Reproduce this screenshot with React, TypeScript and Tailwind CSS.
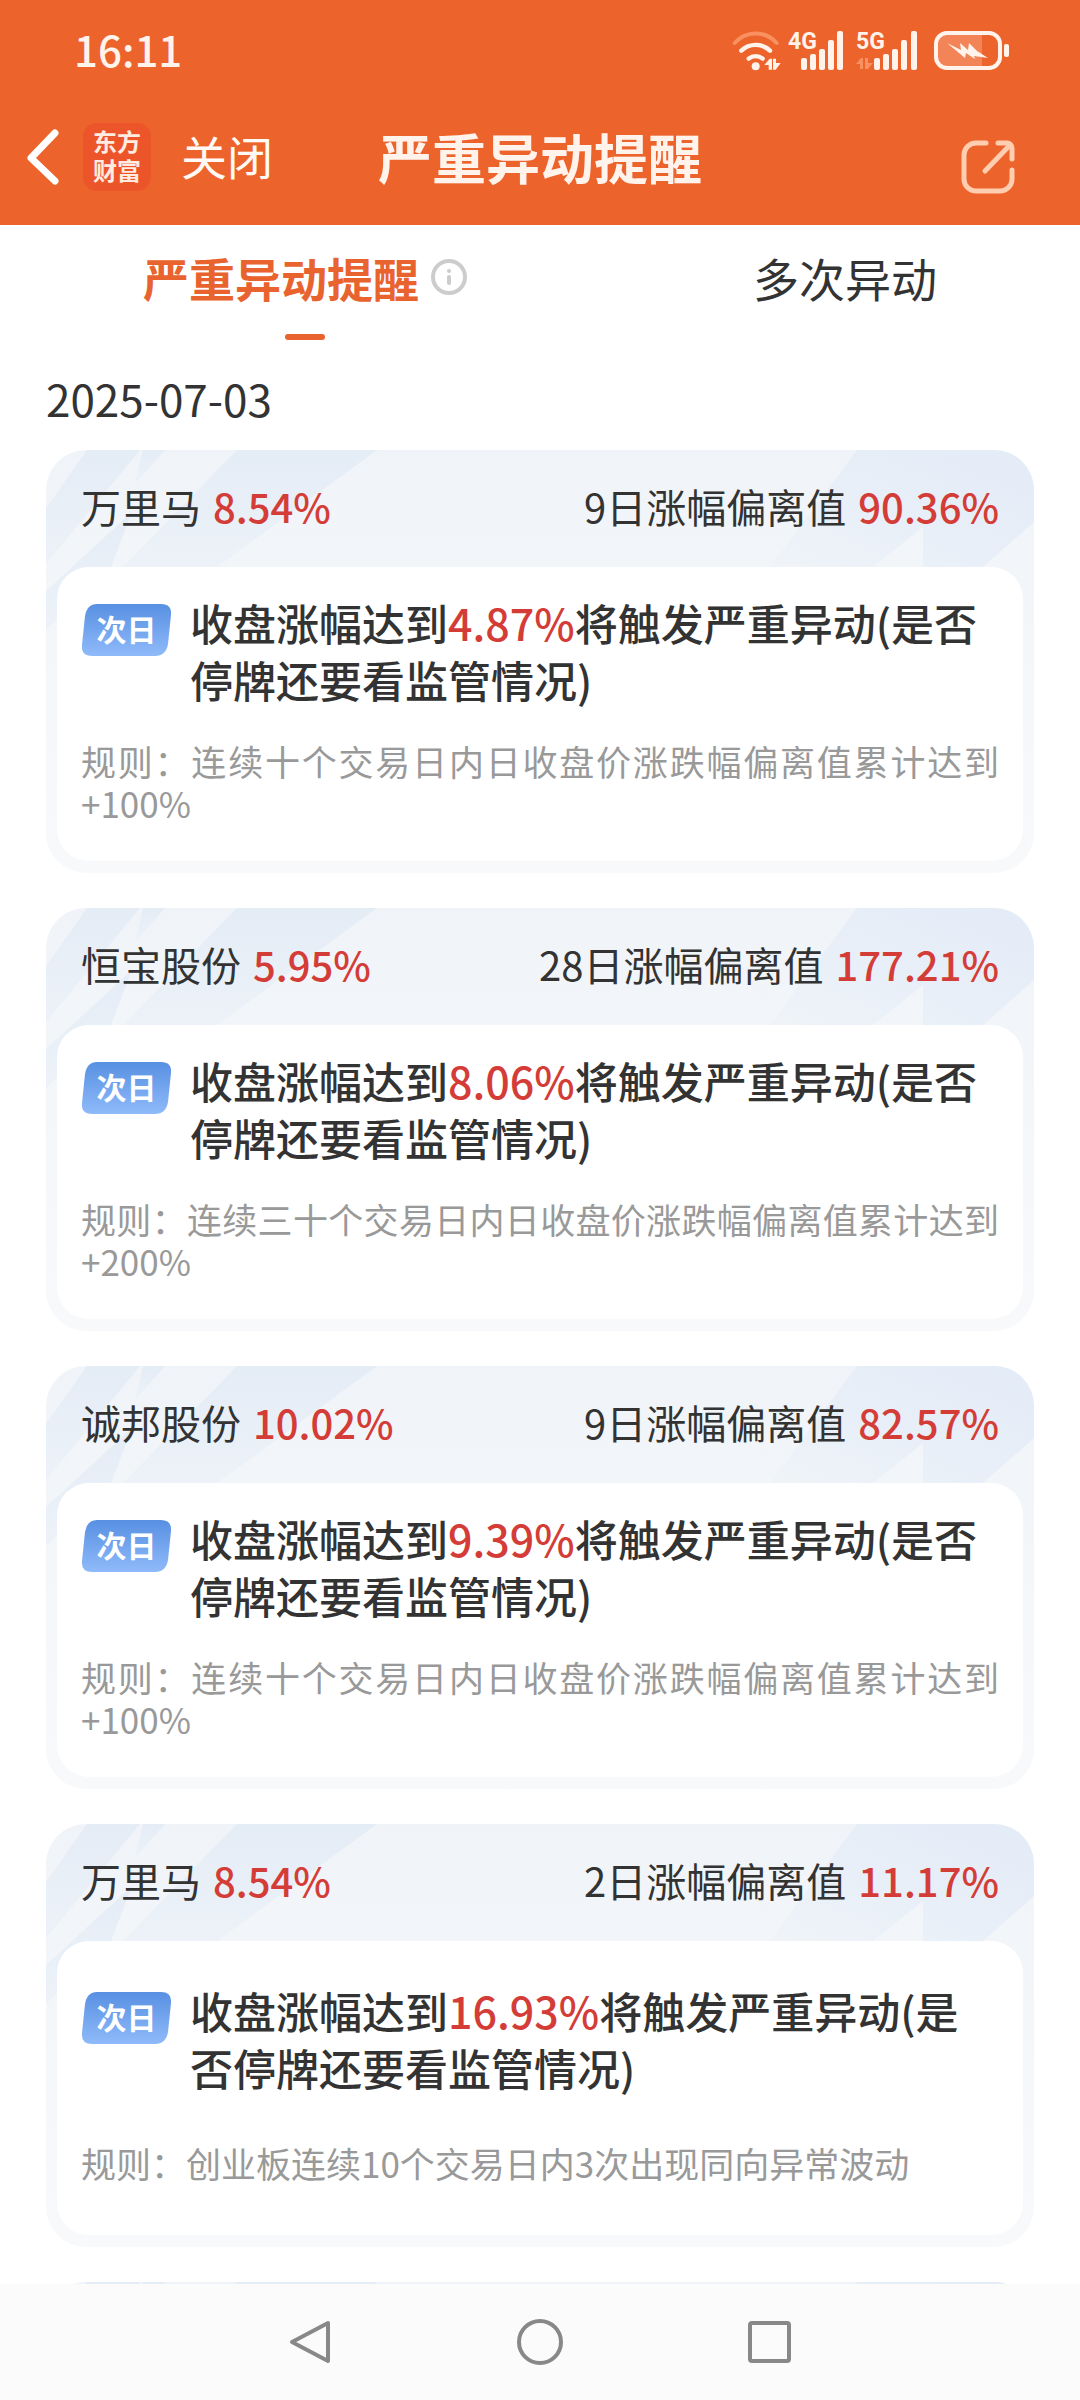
import React, { useState } from 'react';

type Alert = {
  name: string;
  change: string;
  deviationLabel: string;
  deviation: string;
  trigger: string;
  rule: string;
};

const DATE = '2025-07-03';

const ALERTS: Alert[] = [
  {
    name: '万里马',
    change: '8.54%',
    deviationLabel: '9日涨幅偏离值',
    deviation: '90.36%',
    trigger: '4.87%',
    rule: '连续十个交易日内日收盘价涨跌幅偏离值累计达到+100%',
  },
  {
    name: '恒宝股份',
    change: '5.95%',
    deviationLabel: '28日涨幅偏离值',
    deviation: '177.21%',
    trigger: '8.06%',
    rule: '连续三十个交易日内日收盘价涨跌幅偏离值累计达到+200%',
  },
  {
    name: '诚邦股份',
    change: '10.02%',
    deviationLabel: '9日涨幅偏离值',
    deviation: '82.57%',
    trigger: '9.39%',
    rule: '连续十个交易日内日收盘价涨跌幅偏离值累计达到+100%',
  },
  {
    name: '万里马',
    change: '8.54%',
    deviationLabel: '2日涨幅偏离值',
    deviation: '11.17%',
    trigger: '16.93%',
    rule: '创业板连续10个交易日内3次出现同向异常波动',
  },
];

function WifiIcon() {
  return (
    <svg width="50" height="40" viewBox="0 0 150 120" fill="none" strokeLinecap="round" aria-hidden="true">
      <path d="M8 36C42 -2 100 -2 134 36" stroke="#f9905f" strokeWidth="12" />
      <path d="M28 59C52 36 90 36 114 59" stroke="#fff3ec" strokeWidth="13" />
      <path d="M50 83C62 73 80 73 92 83" stroke="#fff3ec" strokeWidth="13" />
      <circle cx="71" cy="106" r="12" fill="#fff3ec" />
      <path d="M97 102L113 83H120V116H110V102ZM123 83H132V96H146L131 116H123Z" fill="#fff3ec" />
    </svg>
  );
}

function SignalIcon({ label, idle }: { label: string; idle?: boolean }) {
  return (
    <svg width="62" height="40" viewBox="0 0 62 40" fill="#fff3ec" aria-hidden="true">
      <text x="0" y="18" fontSize="23" fontWeight="700" fontFamily="Roboto, sans-serif">
        {label}
      </text>
      {idle && <path d="M0 33L5 27H7V38H4V33ZM9 27H12V32H17L12 38H9Z" fill="#f9905f" />}
      <rect x={idle ? 18 : 13} y="27" width="6" height="12" rx="2" />
      <rect x={idle ? 27 : 22} y="23" width="6" height="16" rx="2" />
      <rect x={idle ? 36 : 31} y="18" width="6" height="21" rx="2" />
      <rect x={idle ? 45 : 40} y="9" width="6" height="30" rx="2" />
      <rect x={idle ? 55 : 49} y="0" width="6" height="39" rx="2" />
    </svg>
  );
}

function BatteryIcon() {
  return (
    <svg width="76" height="40" viewBox="0 0 76 40" aria-hidden="true">
      <path d="M12 3H48V37H12A10 10 0 0 1 2 27V13A10 10 0 0 1 12 3Z" fill="#f28457" />
      <rect x="2" y="2" width="64" height="35" rx="11" fill="none" stroke="#fff3ec" strokeWidth="4" />
      <rect x="70" y="13" width="5" height="13" rx="2" fill="#fff3ec" />
      <path d="M13 12L27 19L26 12L34 19L35 12L43 20L54 27L40 25L41 28L32 22L31 27Z" fill="#fff3ec" />
    </svg>
  );
}

function StatusBar() {
  return (
    <div className="flex h-[102px] items-center justify-between pr-[70px] pl-[74px]">
      <span className="pb-1 text-[42px] leading-none font-medium text-[#fff3ec]">16:11</span>
      <div className="flex items-center">
        <WifiIcon />
        <div className="ml-[6px] flex gap-[6px]">
          <SignalIcon label="4G" />
          <SignalIcon label="5G" idle />
        </div>
        <div className="ml-4">
          <BatteryIcon />
        </div>
      </div>
    </div>
  );
}

function TitleBar() {
  return (
    <div className="grid h-[123px] grid-cols-[1fr_auto_1fr] items-center pb-[14px]">
      <div className="flex items-center pl-[25px]">
        <button type="button" aria-label="返回">
          <svg width="36" height="58" viewBox="0 0 36 58" fill="none" stroke="#fff" strokeWidth="7" strokeLinecap="round" strokeLinejoin="round">
            <path d="M30 5L6 30L30 53" />
          </svg>
        </button>
        <span className="ml-[22px] flex h-[68px] w-[68px] flex-col items-center justify-center rounded-[14px] bg-[#ec552a] pb-1 text-2xl leading-[29px] font-bold text-[#ffebe0]">
          <span>东方</span>
          <span>财富</span>
        </span>
        <button type="button" className="ml-[30px] pb-1 text-[46px] leading-none text-[#fffaf5]">
          关闭
        </button>
      </div>
      <h1 className="text-[54px] leading-none font-bold text-[#fff3ec]">严重异动提醒</h1>
      <button type="button" aria-label="分享" className="mt-5 mr-[64px] justify-self-end">
        <svg width="56" height="56" viewBox="0 0 56 56" fill="none" stroke="#ffcdb0" strokeWidth="5" strokeLinecap="round" strokeLinejoin="round">
          <path d="M26 4H16A12 12 0 0 0 4 16V40A12 12 0 0 0 16 52H40A12 12 0 0 0 52 40V31" />
          <path d="M38 4H47A5 5 0 0 1 52 9V20" />
          <path d="M25 32L50 6" />
        </svg>
      </button>
    </div>
  );
}

function Tabs() {
  const [active, setActive] = useState(0);
  const tabs = ['严重异动提醒', '多次异动'];

  return (
    <div role="tablist" className="flex h-[115px] items-start justify-around pt-6">
      {tabs.map((tab, i) => (
        <button
          key={tab}
          type="button"
          role="tab"
          aria-selected={active === i}
          onClick={() => setActive(i)}
          className="flex flex-col items-center"
        >
          <span className={`flex items-center gap-3 text-[46px] leading-[56px] ${active === i ? 'font-bold text-[#e9632f]' : 'text-[#333]'}`}>
            {tab}
            {i === 0 && (
              <svg width="36" height="36" viewBox="0 0 36 36" fill="none" stroke="#ccc" aria-hidden="true">
                <circle cx="18" cy="18" r="16" strokeWidth="4" />
                <circle cx="18" cy="12" r="2" fill="#ccc" stroke="none" />
                <path d="M18 18V24" strokeWidth="4" strokeLinecap="round" />
              </svg>
            )}
          </span>
          {active === i && <span className="mt-[29px] h-[6px] w-10 rounded-full bg-[#e9632f]" />}
        </button>
      ))}
    </div>
  );
}

// Faceted blue pattern behind the card header
function CardPattern() {
  return (
    <>
      <svg className="absolute top-0 left-0" width="340" height="180" viewBox="0 0 340 180" aria-hidden="true">
        <defs>
          <linearGradient id="facetLeft" x1="0" y1="0" x2="0" y2="1">
            <stop offset="0" stopColor="#e4ecf6" />
            <stop offset="1" stopColor="#edf2f8" />
          </linearGradient>
        </defs>
        <g fill="url(#facetLeft)">
          <path d="M41 0L0 58V114L94 0Z" />
          <path d="M97 0H119L89 34Z" />
          <path d="M0 141L86 62L65 117L0 180Z" />
          <path d="M191 0H331L171 117H77Z" />
        </g>
      </svg>
      <svg className="absolute top-0 right-0" width="264" height="117" viewBox="0 0 264 117" aria-hidden="true">
        <defs>
          <linearGradient id="facetRight" x1="1" y1="0" x2="0" y2="1">
            <stop offset="0" stopColor="#e3ebf7" />
            <stop offset="0.55" stopColor="#e8eff8" />
            <stop offset="1" stopColor="#f0f4f8" />
          </linearGradient>
        </defs>
        <path d="M87 0H264V72L213 117H153V77L103 117H0Z" fill="url(#facetRight)" />
      </svg>
    </>
  );
}

function NextDayTag() {
  return (
    <span className="relative mt-[10px] flex h-[52px] w-[91px] shrink-0 items-center justify-center">
      <svg className="absolute inset-0" width="91" height="52" viewBox="0 0 91 52" aria-hidden="true">
        <defs>
          <linearGradient id="tagFill" x1="0" y1="0" x2="0" y2="1">
            <stop offset="0" stopColor="#5890e2" />
            <stop offset="1" stopColor="#8fbafa" />
          </linearGradient>
        </defs>
        <path d="M16 0H80Q91 0 90 11L87 40Q85 52 74 52H11Q0 52 1 41L4 12Q6 0 16 0Z" fill="url(#tagFill)" />
      </svg>
      <span className="relative pb-1 text-[30px] leading-none font-bold text-white">次日</span>
    </span>
  );
}

function AlertCard({ alert }: { alert?: Alert }) {
  return (
    <li className="relative shrink-0 overflow-hidden rounded-[40px] bg-linear-to-b from-[#f0f4f8] to-[#f8f9fb] px-[11px] pb-3">
      <CardPattern />
      <div className="relative flex h-[117px] items-center justify-between px-6 pb-[6px] text-[40px] leading-none text-[#333]">
        {alert && (
          <>
            <h2 className="flex gap-3">
              {alert.name}
              <span className="font-medium text-[#d43d37]">{alert.change}</span>
            </h2>
            <p className="flex gap-3">
              {alert.deviationLabel}
              <span className="font-medium text-[#d43d37]">{alert.deviation}</span>
            </p>
          </>
        )}
      </div>
      <div className="relative flex min-h-[294px] flex-col justify-evenly gap-1 rounded-[32px] bg-white px-6 pb-[10px]">
        {alert && (
          <>
            <div className="flex gap-[18px]">
              <NextDayTag />
              <p className="text-[43px] leading-[57px] font-medium text-[#333]">
                收盘涨幅达到<span className="text-[#d43d37]">{alert.trigger}</span>将触发严重异动(是否停牌还要看监管情况)
              </p>
            </div>
            <p className="text-justify text-[35px] leading-[42px] text-[#999]">{`规则：${alert.rule}`}</p>
          </>
        )}
      </div>
    </li>
  );
}

function NavBar() {
  return (
    <nav className="flex h-[116px] shrink-0 items-center justify-center bg-[#fbfbfb]">
      <button type="button" aria-label="后退" className="flex w-[230px] justify-center">
        <svg width="44" height="48" viewBox="0 0 44 48" fill="none" stroke="#888" strokeWidth="4" strokeLinejoin="round">
          <path d="M40 5V43L4 24Z" />
        </svg>
      </button>
      <button type="button" aria-label="主页" className="flex w-[230px] justify-center">
        <svg width="48" height="48" viewBox="0 0 48 48" fill="none" stroke="#888" strokeWidth="4">
          <circle cx="24" cy="24" r="21" />
        </svg>
      </button>
      <button type="button" aria-label="最近任务" className="flex w-[230px] justify-center">
        <svg width="46" height="46" viewBox="0 0 46 46" fill="none" stroke="#888" strokeWidth="4">
          <rect x="3" y="4" width="39" height="38" rx="2" />
        </svg>
      </button>
    </nav>
  );
}

export default function App() {
  return (
    <div className="flex h-screen flex-col bg-white font-['Noto_Sans_CJK_SC',sans-serif]" lang="zh-CN">
      <header className="shrink-0 bg-[#ed632c]">
        <StatusBar />
        <TitleBar />
      </header>
      <main className="flex min-h-0 flex-1 flex-col overflow-hidden">
        <Tabs />
        <div className="px-[46px]">
          <p className="pt-9 pb-[30px] text-[44px] leading-[44px] text-[#333]">{DATE}</p>
          <ul className="flex flex-col gap-[35px]">
            {ALERTS.map((alert, i) => (
              <AlertCard key={i} alert={alert} />
            ))}
            <AlertCard />
          </ul>
        </div>
      </main>
      <NavBar />
    </div>
  );
}
